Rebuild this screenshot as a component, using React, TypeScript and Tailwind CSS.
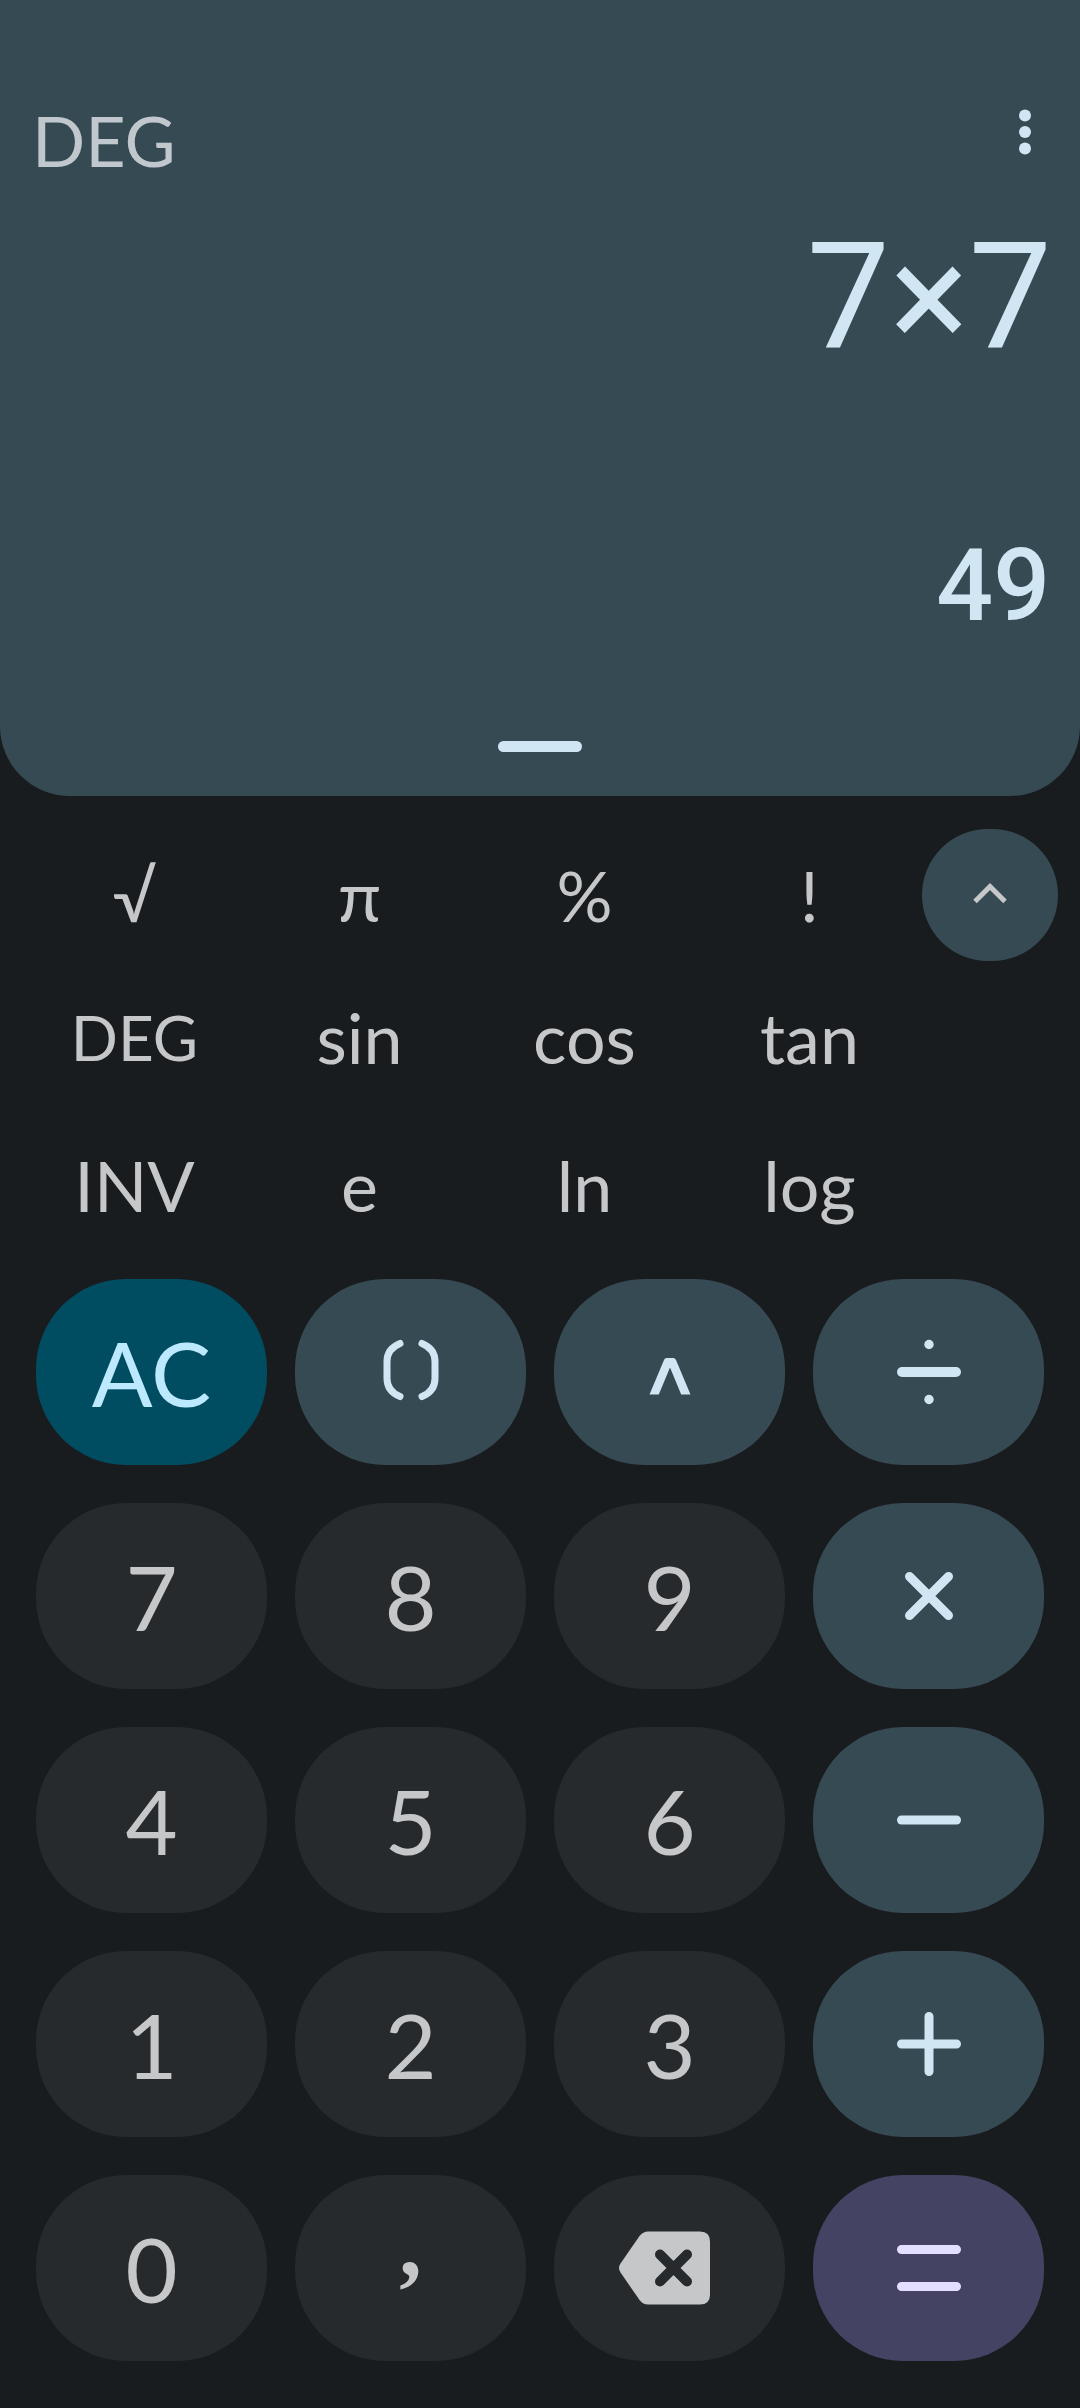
import type { ReactNode } from "react";

const strokeIcon = {
  fill: "none",
  stroke: "currentColor",
  strokeLinecap: "round" as const,
  strokeLinejoin: "round" as const,
  "aria-hidden": true,
};

function MoreIcon() {
  return (
    <svg className="h-16 w-6" viewBox="0 0 24 64" fill="currentColor" aria-hidden="true">
      <circle cx="12" cy="15.5" r="6" />
      <circle cx="12" cy="32" r="6" />
      <circle cx="12" cy="48.5" r="6" />
    </svg>
  );
}

function ChevronUpIcon() {
  return (
    <svg className="h-9 w-9" viewBox="0 0 36 36" fill="none" stroke="currentColor" strokeWidth="5" aria-hidden="true">
      <path d="M3 24.5 18 9.5l15 15" />
    </svg>
  );
}

function ParensIcon() {
  return (
    <svg className="h-20 w-20" viewBox="0 0 80 80" strokeWidth="7" {...strokeIcon}>
      <path d="M29 11.500C20.500 15 16 21 16 29.500v17C16 55 20.500 61 29 64.500" />
      <path d="M51 11.500C59.500 15 64 21 64 29.500v17C64 55 59.500 61 51 64.500" />
    </svg>
  );
}

function PowerIcon() {
  return (
    <svg className="h-20 w-20" viewBox="0 0 80 80" fill="currentColor" aria-hidden="true">
      <path d="M19.500 62.500 34 28q.9-2 2.600-2h6.800q1.700 0 2.600 2l14.500 34.500h-9.300L40 35.500 28.800 62.500z" />
    </svg>
  );
}

function DivideIcon() {
  return (
    <svg className="h-20 w-20" viewBox="0 0 80 80" strokeWidth="10" {...strokeIcon}>
      <path d="M13 40h54" />
      <circle cx="40" cy="12.500" r="4.700" fill="currentColor" stroke="none" />
      <circle cx="40" cy="67.500" r="4.700" fill="currentColor" stroke="none" />
    </svg>
  );
}

function TimesIcon() {
  return (
    <svg className="h-20 w-20" viewBox="0 0 80 80" strokeWidth="9" {...strokeIcon}>
      <path d="M20.500 20.500l39 39M59.500 20.500l-39 39" />
    </svg>
  );
}

function MinusIcon() {
  return (
    <svg className="h-20 w-20" viewBox="0 0 80 80" strokeWidth="9" {...strokeIcon}>
      <path d="M12.500 40h55" />
    </svg>
  );
}

function PlusIcon() {
  return (
    <svg className="h-20 w-20" viewBox="0 0 80 80" strokeWidth="9" {...strokeIcon}>
      <path d="M12.500 40h55M40 12.500v55" />
    </svg>
  );
}

function EqualsIcon() {
  return (
    <svg className="h-20 w-20" viewBox="0 0 80 80" strokeWidth="9" {...strokeIcon}>
      <path d="M12.500 21.500h55M12.500 58.500h55" />
    </svg>
  );
}

function BackspaceIcon() {
  return (
    <svg className="h-20 w-[101px]" viewBox="0 0 101 80" aria-hidden="true">
      <path
        fill="currentColor"
        d="M29 3.500h52q10 0 10 10v53q0 10-10 10H29q-5 0-8.500-4.500L1.500 44.500q-3-4.500 0-9L20.500 8q3.500-4.500 8.500-4.500z"
      />
      <path d="M41 26.500l27 27M68 26.500l-27 27" stroke="#262a2d" strokeWidth="10" strokeLinecap="round" fill="none" />
    </svg>
  );
}

const tones = {
  number: "bg-[#262a2d] text-[#c5c7c9]",
  operator: "bg-[#364a53] text-[#d1e6f3]",
  clear: "bg-[#004d62] text-[#bde9ff]",
  equals: "bg-[#454363] text-[#e3dfff]",
};

type Key = { label: string; tone: keyof typeof tones; face?: ReactNode };

const keys: Key[] = [
  { label: "AC", tone: "clear" },
  { label: "Parentheses", tone: "operator", face: <ParensIcon /> },
  { label: "Power", tone: "operator", face: <PowerIcon /> },
  { label: "Divide", tone: "operator", face: <DivideIcon /> },
  { label: "7", tone: "number" },
  { label: "8", tone: "number" },
  { label: "9", tone: "number" },
  { label: "Multiply", tone: "operator", face: <TimesIcon /> },
  { label: "4", tone: "number" },
  { label: "5", tone: "number" },
  { label: "6", tone: "number" },
  { label: "Subtract", tone: "operator", face: <MinusIcon /> },
  { label: "1", tone: "number" },
  { label: "2", tone: "number" },
  { label: "3", tone: "number" },
  { label: "Add", tone: "operator", face: <PlusIcon /> },
  { label: "0", tone: "number" },
  {
    label: ",",
    tone: "number",
    face: <span className="pb-12 font-['Liberation_Serif',serif] font-bold">,</span>,
  },
  { label: "Backspace", tone: "number", face: <BackspaceIcon /> },
  { label: "Equals", tone: "equals", face: <EqualsIcon /> },
];

const functionRows = [
  ["DEG", "sin", "cos", "tan"],
  ["INV", "e", "ln", "log"],
];

function Display() {
  return (
    <section className="flex flex-col rounded-b-[70px] bg-[#364a53] pt-[100px] pb-11 text-[#d1e6f3]">
      <header className="flex items-start justify-between pr-[43px] pl-8">
        <span className="text-[70px] leading-[80px] text-[#c0c8cd]">DEG</span>
        <button type="button" aria-label="More options">
          <MoreIcon />
        </button>
      </header>
      <output className="mt-[30px] px-7 text-right font-['Roboto',sans-serif] text-[148px] leading-[176px]">7×7</output>
      <output className="mt-[140px] px-[30px] text-right font-['Roboto',sans-serif] text-[100px] leading-[120px] font-medium">
        49
      </output>
      <button type="button" aria-label="Show history" className="mt-[95px] self-center">
        <span className="block h-[11px] w-[84px] rounded-full bg-[#d1e6f3]" />
      </button>
    </section>
  );
}

function FunctionPanel() {
  return (
    <section className="mt-[33px] px-[22px] text-[70px] text-[#c5c7c9]">
      <div className="flex h-[132px]">
        <div className="grid flex-1 grid-cols-4">
          {["√", "π", "%", "!"].map((label) => (
            <button key={label} type="button">
              {label}
            </button>
          ))}
        </div>
        <button
          type="button"
          aria-label="Hide functions"
          className="flex w-[136px] items-center justify-center rounded-full bg-[#364a53]"
        >
          <ChevronUpIcon />
        </button>
      </div>
      {functionRows.map((row) => (
        <div key={row[0]} className="mr-[136px] grid h-[148px] grid-cols-4 pt-1">
          {row.map((label) => (
            <button key={label} type="button" className={label === "DEG" ? "text-[62px]" : ""}>
              {label}
            </button>
          ))}
        </div>
      ))}
    </section>
  );
}

function Keypad() {
  return (
    <section className="mt-[22px] grid grid-cols-4 gap-x-7 gap-y-[38px] px-9 pb-[47px]">
      {keys.map(({ label, tone, face }) => (
        <button
          key={label}
          type="button"
          aria-label={label}
          className={`flex h-[186px] items-center justify-center rounded-[90px] text-[90px] ${tones[tone]}`}
        >
          {face ?? label}
        </button>
      ))}
    </section>
  );
}

export default function App() {
  return (
    <main className="flex min-h-screen flex-col bg-[#191c1e] font-['Lato','Open_Sans',sans-serif]">
      <Display />
      <FunctionPanel />
      <Keypad />
    </main>
  );
}
